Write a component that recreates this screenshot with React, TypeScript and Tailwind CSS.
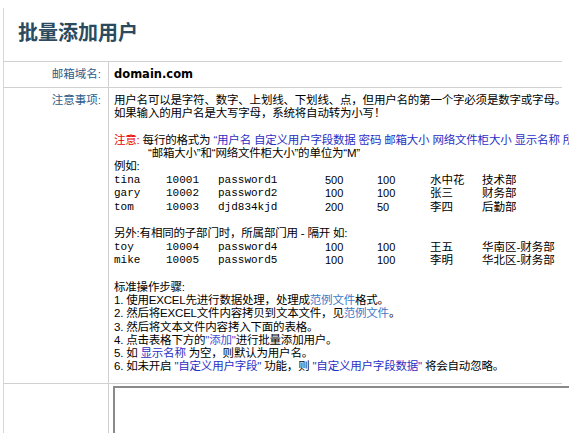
const SANS = "font-['Liberation_Sans','Noto_Sans_CJK_SC',sans-serif]";
const MONO = "font-['Liberation_Mono','Noto_Sans_CJK_SC',monospace]";

type Row = [string, string, string, string, string, string, string];

const sample: Row[] = [
  ["tina", "10001", "password1", "500", "100", "水中花", "技术部"],
  ["gary", "10002", "password2", "100", "100", "张三", "财务部"],
  ["tom", "10003", "djd834kjd", "200", "50", "李四", "后勤部"],
];

const subDept: Row[] = [
  ["toy", "10004", "password4", "100", "100", "王五", "华南区-财务部"],
  ["mike", "10005", "password5", "100", "100", "李明", "华北区-财务部"],
];

function SampleLine({ row }: { row: Row }) {
  return (
    <div className="flex h-[13.5px] items-center whitespace-nowrap tracking-normal">
      <span className={`w-[52px] text-[11px] ${MONO}`}>{row[0]}</span>
      <span className={`w-[52px] text-[11px] ${MONO}`}>{row[1]}</span>
      <span className={`w-[107px] text-[11px] ${MONO}`}>{row[2]}</span>
      <span className="w-[52px] text-[11px]">{row[3]}</span>
      <span className="w-[53px] text-[11px]">{row[4]}</span>
      <span className="w-[52px]">{row[5]}</span>
      <span>{row[6]}</span>
    </div>
  );
}

const Blank = () => <div className="h-[13.25px]" />;

export default function App() {
  const blue = "text-[#2b2fc4]";
  const link = "text-[#3a78c8]";

  return (
    <div className={`h-[433px] w-[569px] overflow-hidden bg-white text-black ${SANS}`}>
      <div className="ml-[3px] mt-[8px] border-l border-[#d6d6d6] pb-10">
        <h1 className="pl-[14px] pt-[13px] text-[20px] leading-[24px] font-bold text-[#2c4a5e]">
          批量添加用户
        </h1>

        <div className="mt-[16px] w-[558px] border-t border-[#d0d0d0]">
          {/* domain */}
          <div className="grid grid-cols-[105px_1fr] border-b border-[#d0d0d0]">
            <div className="flex h-[25px] items-center justify-end border-r border-[#d0d0d0] pr-[7px] text-[11.5px] text-[#2d5c8c]">
              邮箱域名:
            </div>
            <div className="flex items-center pl-[5px] font-['DejaVu_Sans',sans-serif] text-[11.5px] font-bold">
              domain.com
            </div>
          </div>

          {/* notes */}
          <div className="grid grid-cols-[105px_1fr] border-b border-[#d0d0d0]">
            <div className="border-r border-[#d0d0d0] pr-[7px] pt-[6px] text-right text-[11.5px] leading-[13.25px] text-[#2d5c8c]">
              注意事项:
            </div>
            <div className="overflow-visible whitespace-nowrap pb-[9px] pl-[5px] pt-[6px] text-[11.5px] leading-[13.25px] tracking-[-0.2px]">
              <div>用户名可以是字符、数字、上划线、下划线、点，但用户名的第一个字必须是数字或字母。</div>
              <div>如果输入的用户名是大写字母，系统将自动转为小写！</div>
              <Blank />
              <div>
                <span className="text-[#e60000]">注意:</span> 每行的格式为{" "}
                <span className={blue}>“用户名 自定义用户字段数据 密码 邮箱大小 网络文件柜大小 显示名称 所属部门”</span>
              </div>
              <div className="pl-[34px]">“邮箱大小”和“网络文件柜大小”的单位为“M”</div>
              <div>例如:</div>
              {sample.map((r) => (
                <SampleLine key={r[0]} row={r} />
              ))}
              <Blank />
              <div>另外:有相同的子部门时，所属部门用 - 隔开 如:</div>
              {subDept.map((r) => (
                <SampleLine key={r[0]} row={r} />
              ))}
              <Blank />
              <div>标准操作步骤:</div>
              <div>
                1. 使用EXCEL先进行数据处理，处理成<span className={link}>范例文件</span>格式。
              </div>
              <div>
                2. 然后将EXCEL文件内容拷贝到文本文件，见<span className={link}>范例文件</span>。
              </div>
              <div>3. 然后将文本文件内容拷入下面的表格。</div>
              <div>
                4. 点击表格下方的<span className="text-[#4a4ad0]">"添加"</span>进行批量添加用户。
              </div>
              <div>
                5. 如 <span className={blue}>显示名称</span> 为空，则默认为用户名。
              </div>
              <div>
                6. 如未开启 <span className={blue}>"自定义用户字段"</span> 功能，则{" "}
                <span className={blue}>"自定义用户字段数据"</span> 将会自动忽略。
              </div>
            </div>
          </div>

          {/* input */}
          <div className="grid grid-cols-[105px_1fr]">
            <div className="h-[60px] border-r border-[#d0d0d0]" />
            <div className="pl-[4px] pt-[2px]">
              <textarea className="h-[120px] w-[520px] resize-none border-2 border-t-[#8a8a8a] border-l-[#8a8a8a] border-r-[#e0e0e0] border-b-[#e0e0e0] outline-none" />
            </div>
          </div>
        </div>
      </div>
    </div>
  );
}
